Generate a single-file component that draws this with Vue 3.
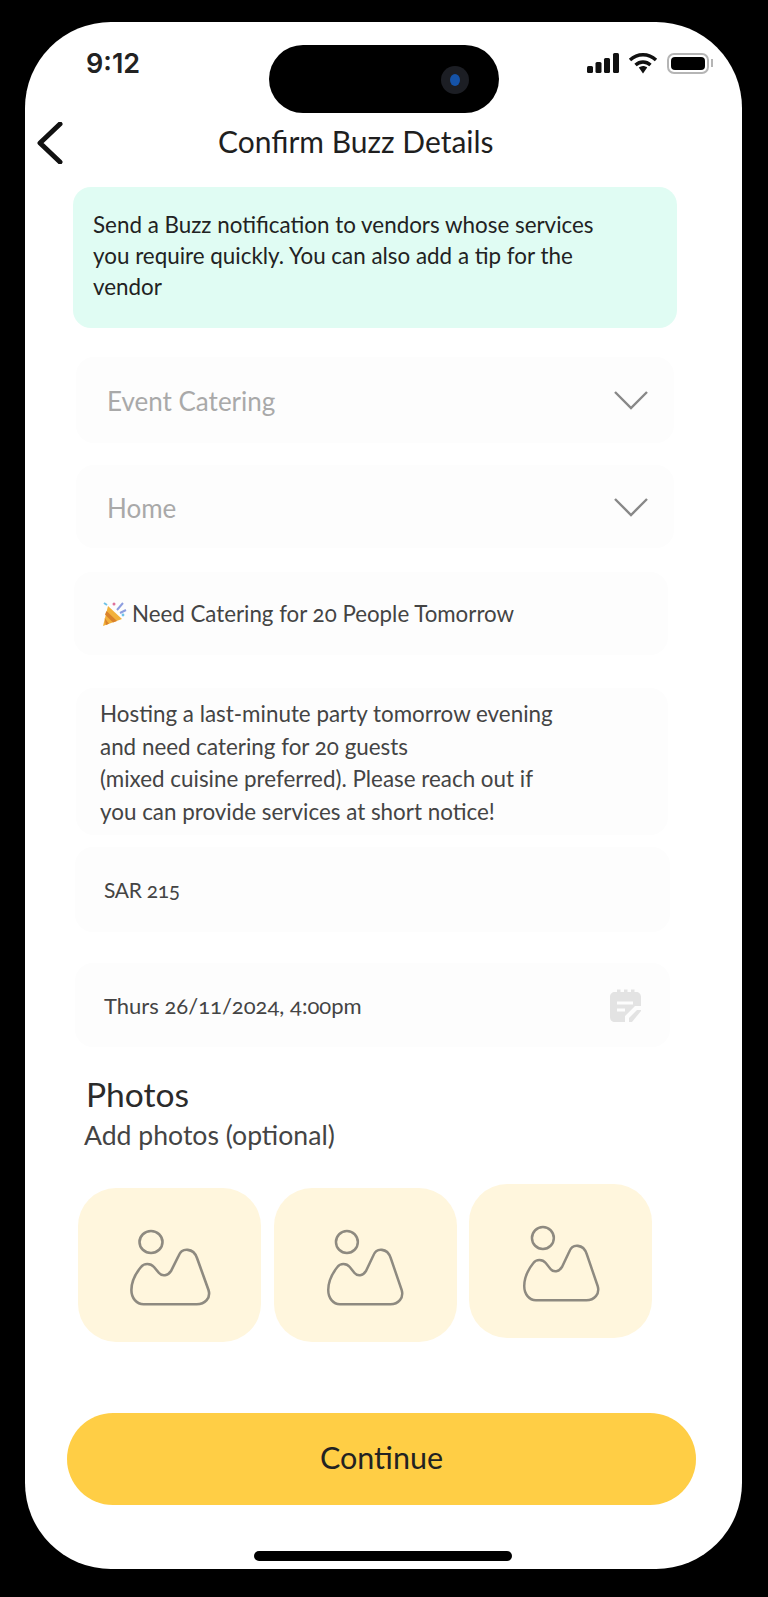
<template>
  <div class="phone">
    <div class="island"><span class="camera"><i></i></span></div>

    <div class="status">
      <span class="time">9:12</span>
      <div class="status-icons">
        <svg width="32" height="20" viewBox="0 0 32 20">
          <rect x="0" y="13" width="6" height="7" rx="1.5" />
          <rect x="8.5" y="9" width="6" height="11" rx="1.5" />
          <rect x="17" y="5" width="6" height="15" rx="1.5" />
          <rect x="26" y="0" width="6" height="20" rx="1.5" />
        </svg>
        <svg width="30" height="22" viewBox="0 0 30 22">
          <path d="M2 8 C9.5 1 20.5 1 28 8" class="wifi" />
          <path d="M7.5 13 C12 9 18 9 22.5 13" class="wifi" />
          <path d="M10.8 15.6 L15 21.5 L19.2 15.6 C16.6 13.6 13.4 13.6 10.8 15.6 Z" />
        </svg>
        <div class="battery"><span></span></div>
      </div>
    </div>

    <div class="header">
      <svg class="back" width="26" height="42" viewBox="0 0 26 42">
        <path d="M23 2 L3 21 L23 40" />
      </svg>
      <h1>Confirm Buzz Details</h1>
    </div>

    <div class="notice">
      Send a Buzz notification to vendors whose services<br />
      you require quickly. You can also add a tip for the<br />
      vendor
    </div>

    <div class="field select first">
      <span>Event Catering</span>
      <svg width="36" height="20" viewBox="0 0 36 20"><path d="M2 2 L18 18 L34 2" /></svg>
    </div>
    <div class="field select second">
      <span>Home</span>
      <svg width="36" height="20" viewBox="0 0 36 20"><path d="M2 2 L18 18 L34 2" /></svg>
    </div>

    <div class="field buzz-title">
      <svg class="popper" width="26" height="25" viewBox="0 0 26 25">
        <path d="M7 5 L21 18 L2 25 Z" fill="#f2b13c" />
        <path d="M5.5 10 L16 20 L12 21.5 L4 13.5 Z" fill="#d9822b" />
        <path d="M3.6 17 L8 22.8 L5 24 Z" fill="#d9822b" />
        <circle cx="13" cy="3" r="1.5" fill="#e0719a" />
        <path d="M16 9 L22 2 M19 12 L25 9" stroke="#8d9ee0" stroke-width="2" fill="none" />
        <circle cx="22" cy="14" r="1.4" fill="#6fc3e8" />
        <path d="M3 2 L6 4" stroke="#6fc3e8" stroke-width="2" />
      </svg>
      <span>Need Catering for 20 People Tomorrow</span>
    </div>

    <div class="field description">
      Hosting a last-minute party tomorrow evening<br />
      and need catering for 20 guests<br />
      (mixed cuisine preferred). Please reach out if<br />
      you can provide services at short notice!
    </div>

    <div class="field amount">SAR 215</div>

    <div class="field date">
      <span>Thurs 26/11/2024, 4:00pm</span>
      <svg width="33" height="33" viewBox="0 0 33 33">
        <path d="M6 3 H8 V0.5 H11.5 V3 H15 V0.5 H18.5 V3 H22 V0.5 H25.5 V3 H27 C30 3 32 5 32 8 V17 H26 L16 27 V33 H6 C3 33 1 31 1 28 V8 C1 5 3 3 6 3 Z" fill="#e3e3e3" />
        <path d="M8 14 H24 M8 21 H16" stroke="#fdfdfd" stroke-width="2.8" />
        <path d="M20 33 V29 L28 21 H32 V22 L23 33 Z" fill="#e3e3e3" />
      </svg>
    </div>

    <h2>Photos</h2>
    <p class="hint">Add photos (optional)</p>

    <div class="tiles">
      <div v-for="t in tiles" :key="t" class="tile" :class="t">
        <svg width="84" height="80" viewBox="0 0 84 80" preserveAspectRatio="none">
          <ellipse cx="23" cy="14" rx="11.5" ry="11" />
          <path d="M15.7 76.3 H68.7 C77 76.3 83 70 80.5 62 L69 30 C65.5 20 54 19 50.5 28 L43 43 C40 48 34 48.5 31 45 L26 39 C22.5 35 16 35 13 39 C8 45 3.4 53 3.4 62 C3.4 70 8.5 76.3 15.7 76.3 Z" />
        </svg>
      </div>
    </div>

    <button class="continue">Continue</button>
    <div class="home-bar"></div>
  </div>
</template>

<script setup>
const tiles = ['one', 'two', 'three']
</script>

<style>
html,
body {
  margin: 0;
  background: #000;
}
</style>

<style scoped>
.phone {
  position: relative;
  box-sizing: border-box;
  width: 717px;
  height: 1547px;
  margin: 22px 0 28px 25px;
  background: #fff;
  border-radius: 86px;
  overflow: hidden;
  display: flex;
  flex-direction: column;
  align-items: flex-start;
  font-family: "Lato", "Open Sans", sans-serif;
  font-variant-numeric: oldstyle-nums;
  color: #2b2b2b;
}

.island {
  position: absolute;
  left: 244px;
  top: 23px;
  width: 230px;
  height: 68px;
  border-radius: 34px;
  background: #000;
}

.camera {
  position: absolute;
  left: 172px;
  top: 21px;
  width: 28px;
  height: 28px;
  border-radius: 50%;
  background: #1c1e24;
}

.camera i {
  position: absolute;
  left: 9px;
  top: 8px;
  width: 10px;
  height: 12px;
  border-radius: 50%;
  background: #1553a8;
}

.status {
  box-sizing: border-box;
  width: 100%;
  height: 26px;
  margin-top: 28px;
  padding: 0 33px 0 61px;
  display: flex;
  justify-content: space-between;
  align-items: center;
}

.time {
  font-family: "Inter", "Liberation Sans", sans-serif;
  font-variant-numeric: normal;
  font-size: 27px;
  font-weight: 600;
  color: #222;
}

.status-icons {
  display: flex;
  align-items: center;
  gap: 9px;
}

.status-icons svg {
  fill: #111;
}

.wifi {
  fill: none;
  stroke: #111;
  stroke-width: 3.4;
}

.battery {
  box-sizing: border-box;
  position: relative;
  width: 42px;
  height: 21px;
  padding: 2px;
  border: 2px solid #b5b5b5;
  border-radius: 7px;
}

.battery span {
  display: block;
  height: 100%;
  border-radius: 4px;
  background: #000;
}

.battery::after {
  content: '';
  position: absolute;
  right: -6px;
  top: 4px;
  width: 2px;
  height: 8px;
  background: #b5b5b5;
}

.header {
  position: relative;
  width: 100%;
  height: 42px;
  margin-top: 46px;
  display: flex;
  align-items: center;
}

.back {
  margin-left: 12px;
  fill: none;
  stroke: #111;
  stroke-width: 5;
  stroke-linecap: round;
  stroke-linejoin: round;
}

h1 {
  margin: -4px 0 0 155px;
  font-size: 30px;
  line-height: 42px;
  font-weight: 400;
  white-space: nowrap;
  color: #1f1f1f;
}

.notice {
  box-sizing: border-box;
  width: 604px;
  height: 141px;
  margin: 23px 0 0 48px;
  padding: 22px 0 0 20px;
  border-radius: 18px;
  background: #e0fcf3;
  font-size: 22.4px;
  line-height: 31px;
  color: #222;
}

.field {
  box-sizing: border-box;
  background: #fdfdfd;
  border-radius: 18px;
  display: flex;
  align-items: center;
  font-size: 22.3px;
  color: #444;
}

.select {
  justify-content: space-between;
  width: 598px;
  margin-left: 51px;
  padding: 0 25px 0 31px;
  font-size: 26px;
  color: #a9a9a9;
}

.select span {
  padding-top: 2px;
}

.select svg {
  fill: none;
  stroke: #888;
  stroke-width: 2.4;
}

.first {
  height: 86px;
  margin-top: 29px;
}

.second {
  height: 83px;
  margin-top: 22px;
}

.buzz-title {
  width: 594px;
  height: 83px;
  margin: 24px 0 0 49px;
  padding: 0 0 0 27px;
  gap: 5px;
}

.description {
  display: block;
  width: 592px;
  height: 147px;
  margin: 33px 0 0 51px;
  padding: 10px 0 0 24px;
  line-height: 32.7px;
  font-size: 22.4px;
}

.amount {
  width: 595px;
  height: 85px;
  margin: 12px 0 0 50px;
  padding-left: 29px;
  font-size: 21px;
  letter-spacing: -0.3px;
}

.date {
  justify-content: space-between;
  width: 595px;
  height: 84px;
  margin: 31px 0 0 50px;
  padding: 0 28px 0 29px;
  font-size: 22px;
}

h2 {
  margin: 27px 0 0 61px;
  font-size: 33.6px;
  line-height: 40px;
  font-weight: 400;
  color: #2b2b2b;
}

.hint {
  margin: 6px 0 0 59px;
  font-size: 26.6px;
  line-height: 30px;
  color: #444;
}

.tiles {
  display: flex;
  align-items: flex-start;
  gap: 12.5px;
  margin: 38px 0 0 53px;
}

.tile {
  width: 183px;
  height: 154px;
  border-radius: 38px;
  background: #fff6dd;
  display: flex;
  justify-content: center;
  padding-top: 40px;
  box-sizing: border-box;
}

.tile svg {
  fill: none;
  stroke: #8e8a80;
  stroke-width: 2.6;
}

.tile.two svg,
.tile.three svg {
  width: 80px;
}

.tile.three {
  margin-top: -4px;
}

.continue {
  width: 629px;
  height: 92px;
  margin: 71px 0 0 42px;
  padding-bottom: 5px;
  border: 0;
  border-radius: 46px;
  background: #ffce45;
  font-family: inherit;
  font-size: 30.5px;
  color: #222;
}

.home-bar {
  width: 258px;
  height: 10px;
  margin: 46px 0 0 229px;
  border-radius: 5px;
  background: #000;
}
</style>
